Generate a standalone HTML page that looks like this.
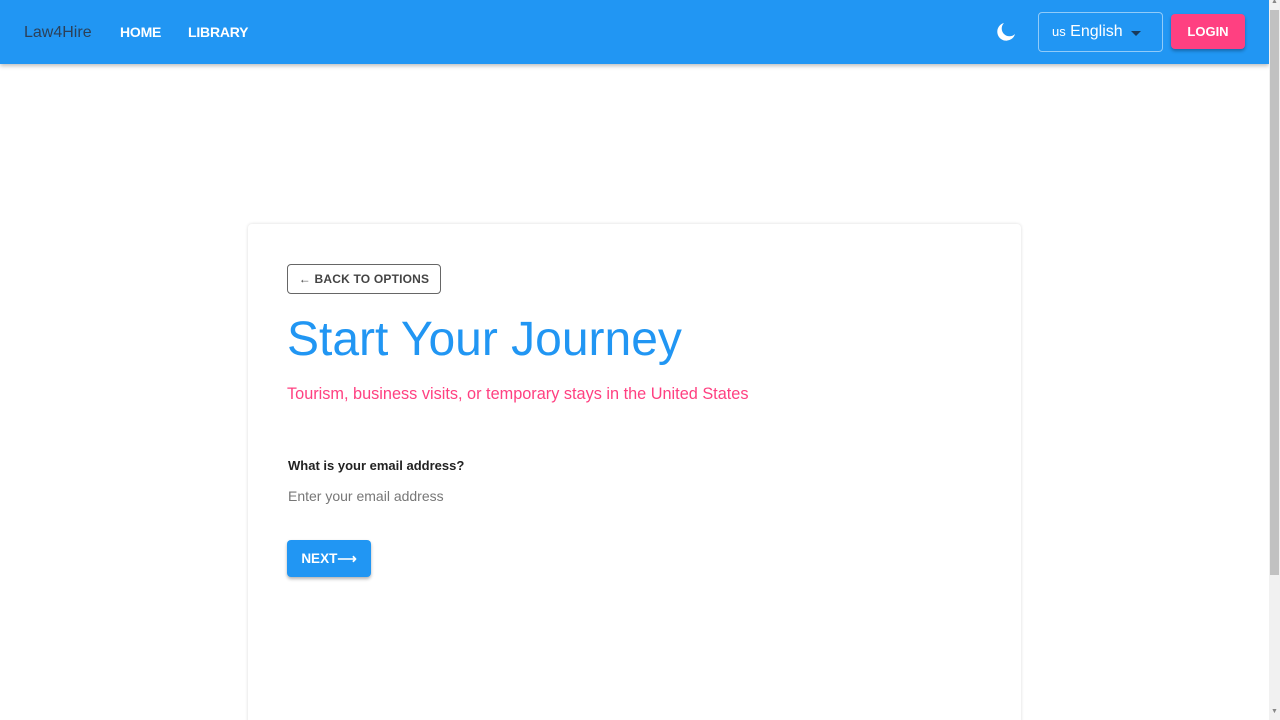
<!DOCTYPE html>
<html style="height:720px;overflow:hidden"><head><meta charset="utf-8"><style>
*{box-sizing:border-box;margin:0;padding:0}
body{width:1280px;height:720px;overflow:hidden;background:#fff;font-family:"Liberation Sans",sans-serif;position:relative}
.bar{position:absolute;left:0;top:0;width:1269px;height:64px;background:#2196f3;box-shadow:0 2px 4px rgba(0,0,0,.25)}
.logo{position:absolute;left:24px;top:24px;font-size:16px;color:#2c4058}
.nav{position:absolute;top:24px;font-size:14px;font-weight:bold;color:#fff;letter-spacing:-.2px}
.lang{position:absolute;left:1038px;top:12px;width:125px;height:40px;border:1px solid rgba(255,255,255,.5);border-radius:4px;color:#fff;font-size:16px;padding:10px 0 0 13px}
.lang small{font-size:13px}
.tri{position:absolute;left:92px;top:18px;border-left:5px solid transparent;border-right:5px solid transparent;border-top:5px solid #1a3a5c}
.login{position:absolute;left:1171px;top:14px;width:74px;height:35px;background:#ff4081;border-radius:4px;color:#fff;font-weight:bold;font-size:13px;text-align:center;line-height:35px;box-shadow:0 2px 3px rgba(0,0,0,.3)}
.sb{position:absolute;left:1269px;top:0;width:11px;height:720px;background:#f1f1f1}
.sb div{position:absolute;left:1px;top:10px;width:9px;height:565px;background:#c1c1c1}
.card{position:absolute;left:248px;top:224px;width:773px;height:520px;background:#fff;border-radius:4px;box-shadow:0 0 3px rgba(0,0,0,.15)}
.back{position:absolute;left:39px;top:40px;width:154px;height:30px;border:1px solid #666;border-radius:4px;font-size:12px;font-weight:bold;color:#444;line-height:29px;text-align:center;letter-spacing:.2px}
h1{position:absolute;left:39px;top:88px;font-size:48px;font-weight:normal;color:#2196f3;white-space:nowrap}
.sub{position:absolute;left:39px;top:161px;font-size:16.3px;color:#ff4081;white-space:nowrap}
.q{position:absolute;left:40px;top:234px;font-size:13px;font-weight:bold;color:#222}
.ph{position:absolute;left:40px;top:264px;font-size:14px;color:#777}
.next{position:absolute;left:39px;top:316px;width:84px;height:37px;background:#2196f3;border-radius:4px;color:#fff;font-weight:bold;font-size:13.5px;line-height:37px;text-align:center;box-shadow:0 2px 3px rgba(0,0,0,.3)}
</style></head><body>
<div class="bar">
<div class="logo">Law4Hire</div>
<div class="nav" style="left:120px">HOME</div>
<div class="nav" style="left:188px">LIBRARY</div>
<svg style="position:absolute;left:996px;top:22px" width="20" height="20" viewBox="0 0 20 20"><path d="M8 1A9 9 0 1 0 19 12A7 7 0 0 1 8 1Z" fill="#fff"/></svg>
<div class="lang"><small>us</small> English<span class="tri"></span></div>
<div class="login">LOGIN</div>
</div>
<div class="sb"><div></div><span style="position:absolute;top:-2px;left:2px;font-size:7px;color:#888">▲</span><span style="position:absolute;top:708px;left:2px;font-size:7px;color:#888">▼</span></div>
<div class="card">
<div class="back">← BACK TO OPTIONS</div>
<h1>Start Your Journey</h1>
<div class="sub">Tourism, business visits, or temporary stays in the United States</div>
<div class="q">What is your email address?</div>
<div class="ph">Enter your email address</div>
<div class="next">NEXT⟶</div>
</div>
</body></html>
